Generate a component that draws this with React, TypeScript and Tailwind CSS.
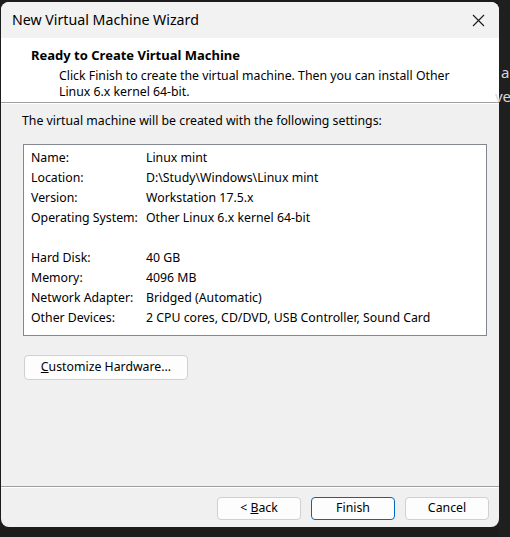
import React from 'react';

const settings: [string, string][] = [
  ['Name:', 'Linux mint'],
  ['Location:', 'D:\\Study\\Windows\\Linux mint'],
  ['Version:', 'Workstation 17.5.x'],
  ['Operating System:', 'Other Linux 6.x kernel 64-bit'],
  ['', ''],
  ['Hard Disk:', '40 GB'],
  ['Memory:', '4096 MB'],
  ['Network Adapter:', 'Bridged (Automatic)'],
  ['Other Devices:', '2 CPU cores, CD/DVD, USB Controller, Sound Card'],
];

const WinButton = ({ children, primary }: { children: React.ReactNode; primary?: boolean }) => (
  <button
    className={
      primary
        ? 'w-[84px] h-[23px] rounded-[4px] border border-[#0067c0] bg-[#fdfdfd] text-[12.3px] text-black'
        : 'w-[84px] h-[23px] rounded-[4px] border border-[#d0d0d0] bg-[#fdfdfd] text-[12.3px] text-black'
    }
  >
    {children}
  </button>
);

export default function App() {
  return (
    <div className="w-[510px] h-[537px] bg-[#1c1c1c] flex overflow-hidden font-['Segoe_UI','Noto_Sans',sans-serif] text-black">
      {/* dialog */}
      <div className="ml-[1px] mt-[2px] w-[498px] h-[525px] rounded-[8px] bg-[#f0f0f0] flex flex-col overflow-hidden shrink-0">
        {/* title bar */}
        <div className="h-[36px] flex items-center justify-between pl-[11px] pr-[14px] bg-[#f2f2f2]">
          <span className="text-[14.2px] leading-none">New Virtual Machine Wizard</span>
          <svg width="13" height="13" viewBox="0 0 13 13">
            <path d="M1 1L12 12M12 1L1 12" stroke="#1a1a1a" strokeWidth="1.1" />
          </svg>
        </div>

        {/* header */}
        <div className="h-[65px] bg-white border-b border-[#a0a0a0] pt-[9px]">
          <div className="pl-[30px] text-[13px] font-bold leading-[16px]">Ready to Create Virtual Machine</div>
          <div className="pl-[58px] pt-[5px] text-[12.3px] leading-[16px]">
            Click Finish to create the virtual machine. Then you can install Other
            <br />
            Linux 6.x kernel 64-bit.
          </div>
        </div>

        {/* body */}
        <div className="flex-1 flex flex-col border-t border-white">
          <div className="pl-[21px] pt-[9px] text-[12.3px] leading-[16px]">
            The virtual machine will be created with the following settings:
          </div>
          <div className="ml-[22px] mt-[15px] w-[464px] bg-white border border-[#828790] pt-[3px] pb-[7px] pl-[7px]">
            {settings.map(([k, v], i) => (
              <div key={i} className="flex h-[20px] items-center text-[12.3px]">
                <span className="w-[115px] shrink-0">{k}</span>
                <span>{v}</span>
              </div>
            ))}
          </div>
          <div className="ml-[23px] mt-[17px]">
            <button className="w-[164px] h-[25px] rounded-[4px] border border-[#d0d0d0] bg-[#fdfdfd] text-[12.3px] text-black">
              <span className="underline">C</span>ustomize Hardware...
            </button>
          </div>
          <div className="flex-1" />
          <div className="border-t border-[#a0a0a0] border-b border-b-white" />
          <div className="flex justify-end gap-[10px] pt-[9px] pb-[7px] pr-[10px]">
            <WinButton>
              &lt; <span className="underline">B</span>ack
            </WinButton>
            <WinButton primary>Finish</WinButton>
            <WinButton>Cancel</WinButton>
          </div>
        </div>
      </div>

      {/* slice of the window behind */}
      <div className="flex-1 relative bg-[#1f1f1f] text-[#d8d8d8] text-[15px] font-['Noto_Sans',sans-serif]">
        <span className="absolute left-[2px] top-[61px]">a</span>
        <span className="absolute left-[-4px] top-[85px]">ve</span>
      </div>
    </div>
  );
}
